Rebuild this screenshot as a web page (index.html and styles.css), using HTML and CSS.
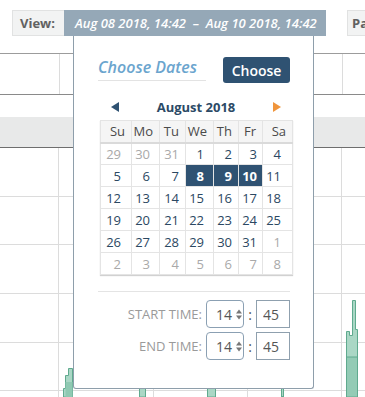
FILE: index.html
```html
<!DOCTYPE html>
<html lang="en">
  <head>
    <meta charset="UTF-8" />
    <meta name="viewport" content="width=device-width, initial-scale=1.0" />
    <title>Choose Dates</title>
    <link rel="stylesheet" href="styles.css">
  </head>
  <body>
    <div class="toolbar">
      <div class="view_label">View:</div>
      <div class="view_range">Aug 08 2018, 14:42 &nbsp;&ndash;&nbsp; Aug 10 2018, 14:42</div>
      <div class="period">Past</div>
    </div>

    <div class="chart">
      <!-- background chart -->
      <svg class="chart_svg" width="365" height="361" viewBox="0 0 365 361">
        <line x1="0" y1="17.5" x2="365" y2="17.5" stroke="#9c9c9c" />
        <line x1="59.5" y1="18" x2="59.5" y2="58" stroke="#dcdcdc" />
        <line x1="342.5" y1="18" x2="342.5" y2="58" stroke="#dcdcdc" />
        <line x1="0" y1="58.5" x2="365" y2="58.5" stroke="#8a8a8a" />
        <rect x="0" y="81" width="365" height="30" fill="#e8e9e9" />
        <line x1="0" y1="111.5" x2="365" y2="111.5" stroke="#6e6e6e" />

        <line x1="58.5" y1="112" x2="58.5" y2="361" stroke="#dcdcdc" />
        <line x1="153.5" y1="112" x2="153.5" y2="361" stroke="#dcdcdc" />
        <line x1="247.5" y1="112" x2="247.5" y2="361" stroke="#dcdcdc" />
        <line x1="341.5" y1="112" x2="341.5" y2="361" stroke="#dcdcdc" />

        <line x1="0" y1="160.5" x2="365" y2="160.5" stroke="#dcdcdc" />
        <line x1="0" y1="208.5" x2="365" y2="208.5" stroke="#dcdcdc" />
        <line x1="0" y1="257.5" x2="365" y2="257.5" stroke="#dcdcdc" />
        <line x1="0" y1="306.5" x2="365" y2="306.5" stroke="#dcdcdc" />
        <line x1="0" y1="354.5" x2="365" y2="354.5" stroke="#dcdcdc" />

        <!-- bars -->
        <path d="M63.5 361V352.5H65.5V339.5H68.5V332.5H72.5V361Z" fill="#aad7c5" stroke="#5faa8e" />
        <path d="M65.5 361V346H72.5V361Z" fill="#8fc9b2" />
        <path d="M346.5 361V295.5H349.5V299.5H352.5V264.5H355.5V293.5H357.5V361Z" fill="#aad7c5" stroke="#5faa8e" />
        <path d="M346.5 361V321H357.5V361Z" fill="#93cbb5" stroke="#5faa8e" />
        <rect x="139.5" y="352" width="6" height="9" fill="#aad7c5" stroke="#5faa8e" />
        <rect x="207.5" y="352" width="8" height="9" fill="#aad7c5" stroke="#5faa8e" />
        <rect x="281.5" y="352" width="2" height="9" fill="#aad7c5" stroke="#5faa8e" />
      </svg>

      <div class="picker">
        <div class="picker_head">
          <div class="picker_title">Choose Dates</div>
          <button class="btn_choose">Choose</button>
        </div>

        <div class="month_row">
          <span class="arrow_prev"></span>
          <span class="month_name">August 2018</span>
          <span class="arrow_next"></span>
        </div>

        <table class="cal">
          <thead>
            <tr><th>Su</th><th>Mo</th><th>Tu</th><th>We</th><th>Th</th><th>Fr</th><th>Sa</th></tr>
          </thead>
          <tbody>
            <tr><td class="muted">29</td><td class="muted">30</td><td class="muted">31</td><td>1</td><td>2</td><td>3</td><td>4</td></tr>
            <tr><td>5</td><td>6</td><td>7</td><td class="sel">8</td><td class="sel">9</td><td class="sel">10</td><td>11</td></tr>
            <tr><td>12</td><td>13</td><td>14</td><td>15</td><td>16</td><td>17</td><td>18</td></tr>
            <tr><td>19</td><td>20</td><td>21</td><td>22</td><td>23</td><td>24</td><td>25</td></tr>
            <tr><td>26</td><td>27</td><td>28</td><td>29</td><td>30</td><td>31</td><td class="muted">1</td></tr>
            <tr><td class="muted">2</td><td class="muted">3</td><td class="muted">4</td><td class="muted">5</td><td class="muted">6</td><td class="muted">7</td><td class="muted">8</td></tr>
          </tbody>
        </table>

        <div class="time_box">
          <div class="time_row">
            <span class="time_label">START TIME:</span>
            <div class="hour_select">
              <span>14</span>
              <svg width="6" height="11" viewBox="0 0 6 11"><path d="M0 4.5L3 0.5L6 4.5Z M0 6.5L3 10.5L6 6.5Z" fill="#777" /></svg>
            </div>
            <span class="colon">:</span>
            <input class="minute" type="text" value="45" readonly />
          </div>
          <div class="time_row">
            <span class="time_label">END TIME:</span>
            <div class="hour_select">
              <span>14</span>
              <svg width="6" height="11" viewBox="0 0 6 11"><path d="M0 4.5L3 0.5L6 4.5Z M0 6.5L3 10.5L6 6.5Z" fill="#777" /></svg>
            </div>
            <span class="colon">:</span>
            <input class="minute" type="text" value="45" readonly />
          </div>
        </div>
      </div>
    </div>
  </body>
</html>
```

FILE: styles.css
```css
* {
  box-sizing: border-box;
  padding: 0;
  margin: 0;
}
body {
  width: 365px;
  height: 397px;
  overflow: hidden;
  background: #fff;
  font-family: "Open Sans", "Liberation Sans", sans-serif;
}
.toolbar {
  display: flex;
  padding: 10px 0 0 12px;
  height: 36px;
  white-space: nowrap;
  overflow: hidden;
}
.view_label,
.period {
  flex-shrink: 0;
  height: 26px;
  line-height: 24px;
  background: #f2f3f3;
  border: 1px solid #e1e2e2;
  color: #616161;
  font-size: 13px;
  font-weight: 700;
}
.view_label {
  width: 52px;
  padding-left: 7px;
  border-right: none;
}
.view_range {
  flex-shrink: 0;
  width: 262px;
  height: 26px;
  line-height: 26px;
  padding-left: 11px;
  background: #95a8b7;
  color: #fff;
  font-size: 13px;
  font-weight: 600;
  font-style: italic;
}
.period {
  margin-left: 21px;
  padding: 0 6px 0 4px;
}
.chart {
  position: relative;
  height: 361px;
}
.chart_svg {
  display: block;
}
.picker {
  position: absolute;
  top: 0;
  left: 73px;
  width: 241px;
  height: 353px;
  padding: 21px 23px 0 24px;
  background: #fff;
  border: 1px solid #8e9eab;
  border-top: none;
  border-radius: 0 0 3px 3px;
}
.picker_head {
  display: flex;
  justify-content: space-between;
  align-items: flex-start;
}
.picker_title {
  width: 108px;
  height: 24px;
  line-height: 20px;
  border-bottom: 1px solid #e3e3e3;
  color: #6ba5ce;
  font-size: 16px;
  font-weight: 600;
  font-style: italic;
}
.btn_choose {
  width: 67px;
  height: 26px;
  border: none;
  border-radius: 3px;
  background: #2f5272;
  color: #fff;
  font-family: "Open Sans", "Liberation Sans", sans-serif;
  font-size: 14px;
  font-weight: 600;
}
.month_row {
  display: flex;
  justify-content: space-between;
  align-items: center;
  height: 21px;
  margin-top: 13px;
  padding: 0 9px 0 13px;
}
.month_name {
  color: #2c4a66;
  font-size: 13px;
  font-weight: 700;
}
.arrow_prev,
.arrow_next {
  width: 0;
  height: 0;
  border-top: 5px solid transparent;
  border-bottom: 5px solid transparent;
}
.arrow_prev {
  border-right: 8px solid #2f5272;
}
.arrow_next {
  border-left: 8px solid #f0953c;
}
.cal {
  width: 192px;
  margin: 3px 0 0 2px;
  border-collapse: collapse;
  border: 1px solid #e4e4e4;
  box-shadow: 0 1px 1px rgba(0, 0, 0, 0.18);
  font-size: 13px;
  table-layout: fixed;
}
.cal th {
  height: 22px;
  padding-right: 6px;
  text-align: right;
  font-weight: 400;
  color: #4a4a4a;
  background: #f5f5f5;
  border: 1px solid #e4e4e4;
  border-bottom: 2px solid #dadada;
}
.cal td {
  height: 22px;
  text-align: right;
  color: #2b4862;
  border: 1px solid #e4e4e4;
}
.cal th:nth-child(1), .cal td:nth-child(1) { width: 31px; }
.cal th:nth-child(2), .cal td:nth-child(2) { width: 28px; }
.cal th:nth-child(3), .cal td:nth-child(3) { width: 26px; }
.cal th:nth-child(4), .cal td:nth-child(4) { width: 28px; }
.cal th:nth-child(5), .cal td:nth-child(5) { width: 25px; }
.cal th:nth-child(6), .cal td:nth-child(6) { width: 24px; }
.cal th:nth-child(7), .cal td:nth-child(7) { width: 30px; }
.cal td:nth-child(1) { padding-right: 10px; }
.cal td:nth-child(2) { padding-right: 9px; }
.cal td:nth-child(3) { padding-right: 6px; }
.cal td:nth-child(4) { padding-right: 9px; }
.cal td:nth-child(5) { padding-right: 6px; }
.cal td:nth-child(6) { padding-right: 5px; }
.cal td:nth-child(7) { padding-right: 11px; }
.cal td.muted {
  color: #a9a9a9;
}
.cal td.sel {
  background: #2f5272;
  color: #fff;
  font-weight: 700;
}
.time_box {
  margin-top: 16px;
  padding-top: 8px;
  border-top: 1px solid #e4e4e4;
}
.time_row {
  display: flex;
  justify-content: flex-end;
  align-items: center;
  margin-bottom: 4px;
}
.time_label {
  margin-right: 4px;
  color: #9a9a9a;
  font-size: 13px;
}
.hour_select {
  display: flex;
  align-items: center;
  gap: 4px;
  width: 38px;
  height: 28px;
  padding-left: 9px;
  border: 1px solid #8ba0b3;
  border-radius: 4px;
  color: #555;
  font-size: 14px;
}
.colon {
  width: 12px;
  text-align: center;
  color: #555;
  font-size: 14px;
}
.minute {
  width: 34px;
  height: 28px;
  padding-left: 6px;
  border: 1px solid #8fa0ae;
  color: #555;
  font-family: "Open Sans", "Liberation Sans", sans-serif;
  font-size: 14px;
  outline: none;
}
```
